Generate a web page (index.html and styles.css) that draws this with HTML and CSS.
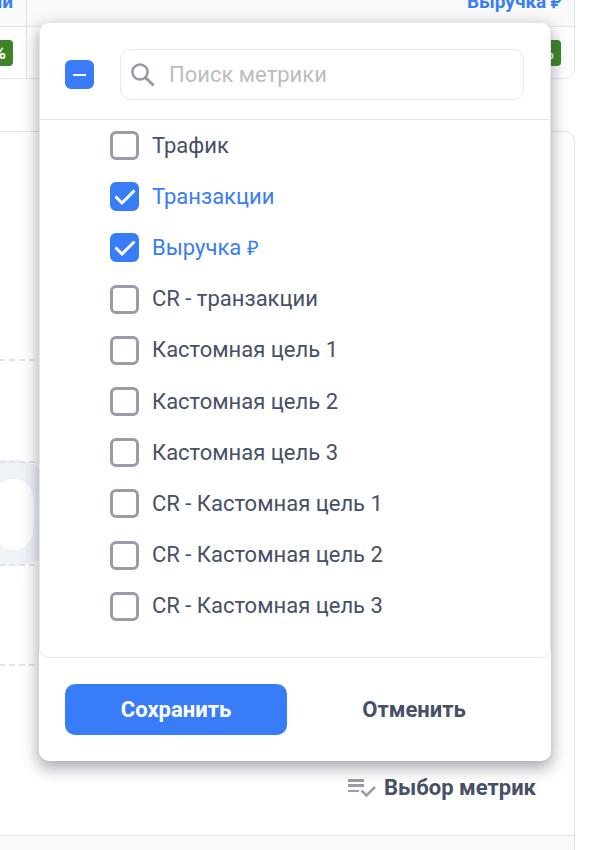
FILE: index.html
```html
<!DOCTYPE html>
<html lang="ru">
<head>
<meta charset="utf-8">
<meta name="viewport" content="width=device-width, initial-scale=1">
<title>Выбор метрик</title>
<link rel="stylesheet" href="styles.css">
</head>
<body>
<main class="page">
  <table class="stats">
    <thead>
      <tr><th class="stats-first">Транзакции</th><th>Выручка <span class="ruble">₽</span></th></tr>
    </thead>
    <tbody>
      <tr><td><span class="badge">%</span></td><td><span class="badge">%</span></td></tr>
    </tbody>
  </table>

  <section class="card">
    <div class="chart">
      <svg class="watermark" viewBox="0 0 60 106" aria-hidden="true">
        <path fill="#eff3f8" fill-rule="evenodd" d="M0 0H12C40 0 60 18 60 53S40 106 12 106H0ZM0 24V84Q5 90 13 90C27 90 34 78 34 64V44C34 29 27 19 13 19Q5 19 0 24Z"/>
      </svg>
      <svg class="grid" aria-hidden="true">
        <g stroke="#e3e3e5" stroke-width="2" stroke-dasharray="6 4" stroke-dashoffset="1">
          <line x1="0" y1="11" x2="100%" y2="11"/>
          <line x1="0" y1="113" x2="100%" y2="113"/>
          <line x1="0" y1="216" x2="100%" y2="216"/>
          <line x1="0" y1="316" x2="100%" y2="316"/>
        </g>
      </svg>
    </div>
    <div class="card-actions">
      <button type="button" class="open-metrics">
        <svg width="30" height="20" viewBox="0 0 30 20" aria-hidden="true">
          <path fill="#9e9aaa" d="M1 1h16v3H1zM1 6h16v3H1zM1 12h11v2H1z"/>
          <path fill="none" stroke="#9e9aaa" stroke-width="2.6" d="M14.5 12.5 19.5 17.5 28 9"/>
        </svg>
        Выбор метрик
      </button>
    </div>
    <div class="card-foot"></div>
  </section>

  <form class="popup">
    <div class="panel">
      <div class="panel-head">
        <input type="checkbox" class="check check-some" aria-label="Выбрать все" checked>
        <div class="search">
          <svg class="search-icon" width="24" height="24" viewBox="0 0 24 24" aria-hidden="true">
            <circle cx="9" cy="9" r="7.6" fill="none" stroke="#9a96a8" stroke-width="2.5"/>
            <path fill="none" stroke="#9a96a8" stroke-width="3" d="M14.5 14.5 22.5 22.5"/>
          </svg>
          <input type="text" class="search-input" placeholder="Поиск метрики" aria-label="Поиск метрики">
        </div>
      </div>
      <div class="metrics">
        <label class="metric"><input type="checkbox" class="check">Трафик</label>
        <label class="metric"><input type="checkbox" class="check" checked>Транзакции</label>
        <label class="metric"><input type="checkbox" class="check" checked><span>Выручка <span class="ruble">₽</span></span></label>
        <label class="metric"><input type="checkbox" class="check">CR - транзакции</label>
        <label class="metric"><input type="checkbox" class="check">Кастомная цель 1</label>
        <label class="metric"><input type="checkbox" class="check">Кастомная цель 2</label>
        <label class="metric"><input type="checkbox" class="check">Кастомная цель 3</label>
        <label class="metric"><input type="checkbox" class="check">CR - Кастомная цель 1</label>
        <label class="metric"><input type="checkbox" class="check">CR - Кастомная цель 2</label>
        <label class="metric"><input type="checkbox" class="check">CR - Кастомная цель 3</label>
      </div>
    </div>
    <div class="actions">
      <button type="button" class="btn btn-primary">Сохранить</button>
      <button type="button" class="btn">Отменить</button>
    </div>
  </form>
</main>
</body>
</html>
```
FILE: styles.css
```css
* { box-sizing: border-box; }

body {
  margin: 0;
  background: #fff;
  color: #475066;
  font-family: Roboto, "Liberation Sans", sans-serif;
  font-size: 22px;
  line-height: 28px;
}

button, input { font: inherit; color: inherit; }

.page {
  position: relative;
  height: 100vh;
  overflow: hidden;
  padding-right: 17px;
  display: flex;
  flex-direction: column;
  gap: 52px;
}

/* Summary table, scrolled partly out of view */
.stats {
  flex: none;
  width: calc(100% + 160px);
  margin: -27px 0 0 -160px;
  table-layout: fixed;
  border-collapse: separate;
  border-spacing: 0;
  border: 1px solid #e1e4ee;
  border-radius: 10px;
}
.stats th, .stats td {
  height: 51px;
  padding: 0 13px 2px;
  text-align: right;
}
.stats th {
  height: 53px;
  padding: 3px 13px 0;
  background: #fafafa;
  border-bottom: 1px solid #e1e4ee;
  color: #387df7;
  font-size: 19px;
  font-weight: 700;
}
.stats-first { width: 186px; }
.stats th:first-child, .stats td:first-child { border-right: 1px solid #e1e4ee; }

.ruble {
  font-family: "Liberation Serif", serif;
  font-size: 20px;
  line-height: 1;
}
.stats .ruble { font-size: 18px; }

.badge {
  display: inline-block;
  min-width: 64px;
  padding: 0 7px;
  border-radius: 4px;
  background: #3c8527;
  color: #fff;
  font-size: 18px;
  font-weight: 700;
  line-height: 26px;
  vertical-align: middle;
}

/* Chart card */
.card {
  flex: 1;
  display: flex;
  flex-direction: column;
  border: 1px solid #e1e4ee;
  border-width: 1px 1px 0 0;
  border-radius: 0 10px 0 0;
}
.chart {
  position: relative;
  flex: 1;
  display: grid;
  align-items: end;
  padding: 0 28px 105px 0;
}
.chart > * { grid-area: 1 / 1; }
.grid { width: 100%; height: 320px; }
.watermark { width: 60px; height: 106px; margin-bottom: 103px; }
.card-actions {
  display: flex;
  justify-content: flex-end;
  padding: 0 38px 33px;
}
.open-metrics {
  display: flex;
  align-items: center;
  gap: 7px;
  padding: 0;
  border: 0;
  background: none;
  font-weight: 700;
}
.card-foot {
  height: 15px;
  background: #fafafa;
  border-top: 1px solid #e1e4ee;
}

/* Metric picker */
.popup {
  position: absolute;
  top: 22px;
  left: 39px;
  right: 41px;
  border-radius: 10px;
  background: #fff;
  box-shadow: 0 6px 16px 1px rgba(60, 60, 80, .45);
}
.panel {
  border: 1px solid #e3e7f0;
  border-radius: 10px;
  padding-bottom: 25px;
}
.panel-head {
  display: flex;
  align-items: center;
  gap: 26px;
  padding: 26px 26px 19px 25px;
  border-bottom: 1px solid #e3e7f0;
}
.search {
  flex: 1;
  display: flex;
  align-items: center;
  gap: 14px;
  height: 51px;
  padding: 0 10px;
  border: 1px solid #e3e9f2;
  border-radius: 10px;
}
.search-icon { flex: none; }
.search-input {
  flex: 1;
  min-width: 0;
  padding: 0;
  border: 0;
  outline: 0;
  background: none;
}
.search-input::placeholder { color: #bdbdbd; opacity: 1; }

.check {
  flex: none;
  appearance: none;
  width: 29px;
  height: 29px;
  margin: 0;
  border: 3px solid #9e9aaa;
  border-radius: 6px;
  background: #fff center / 29px 29px no-repeat;
}
.check:checked {
  border-color: #387df7;
  background-color: #387df7;
  background-image: url("data:image/svg+xml,%3Csvg xmlns='http://www.w3.org/2000/svg' viewBox='0 0 29 29'%3E%3Cpath fill='none' stroke='%23fff' stroke-width='3' d='M5.5 14.5 12 21 24.5 8.5'/%3E%3C/svg%3E");
}
.check-some:checked {
  background-image: url("data:image/svg+xml,%3Csvg xmlns='http://www.w3.org/2000/svg' viewBox='0 0 29 29'%3E%3Cpath fill='%23fff' d='M8 14h13v2H8z'/%3E%3C/svg%3E");
}

.metrics {
  display: grid;
  grid-auto-rows: 1fr;
  height: 512px;
  padding: 0 26px 0 70px;
}
.metric {
  display: flex;
  align-items: center;
  gap: 13px;
}
.metric:has(:checked) { color: #387df7; }

.actions {
  display: flex;
  gap: 16px;
  padding: 26px;
}
.btn {
  flex: 1;
  height: 51px;
  padding: 0;
  border: 0;
  border-radius: 10px;
  background: none;
  font-weight: 700;
}
.btn-primary { background: #387df7; color: #fff; }
```
